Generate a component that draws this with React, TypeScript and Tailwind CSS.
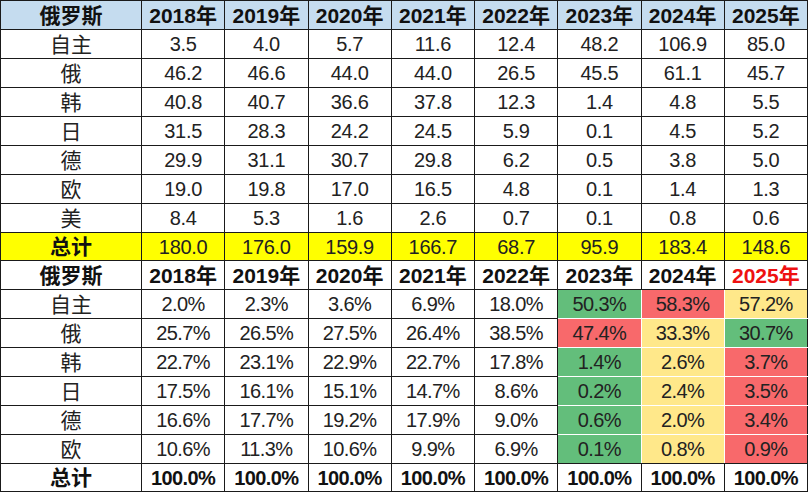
import React from 'react';

const years = ['2018年', '2019年', '2020年', '2021年', '2022年', '2023年', '2024年', '2025年'];

const volume: [string, string[]][] = [
  ['自主', ['3.5', '4.0', '5.7', '11.6', '12.4', '48.2', '106.9', '85.0']],
  ['俄', ['46.2', '46.6', '44.0', '44.0', '26.5', '45.5', '61.1', '45.7']],
  ['韩', ['40.8', '40.7', '36.6', '37.8', '12.3', '1.4', '4.8', '5.5']],
  ['日', ['31.5', '28.3', '24.2', '24.5', '5.9', '0.1', '4.5', '5.2']],
  ['德', ['29.9', '31.1', '30.7', '29.8', '6.2', '0.5', '3.8', '5.0']],
  ['欧', ['19.0', '19.8', '17.0', '16.5', '4.8', '0.1', '1.4', '1.3']],
  ['美', ['8.4', '5.3', '1.6', '2.6', '0.7', '0.1', '0.8', '0.6']],
];
const volumeTotal = ['180.0', '176.0', '159.9', '166.7', '68.7', '95.9', '183.4', '148.6'];

// g = green, r = red, y = yellow for the last three columns
const share: [string, string[], string][] = [
  ['自主', ['2.0%', '2.3%', '3.6%', '6.9%', '18.0%', '50.3%', '58.3%', '57.2%'], 'gry'],
  ['俄', ['25.7%', '26.5%', '27.5%', '26.4%', '38.5%', '47.4%', '33.3%', '30.7%'], 'ryg'],
  ['韩', ['22.7%', '23.1%', '22.9%', '22.7%', '17.8%', '1.4%', '2.6%', '3.7%'], 'gyr'],
  ['日', ['17.5%', '16.1%', '15.1%', '14.7%', '8.6%', '0.2%', '2.4%', '3.5%'], 'gyr'],
  ['德', ['16.6%', '17.7%', '19.2%', '17.9%', '9.0%', '0.6%', '2.0%', '3.4%'], 'gyr'],
  ['欧', ['10.6%', '11.3%', '10.6%', '9.9%', '6.9%', '0.1%', '0.8%', '0.9%'], 'gyr'],
];

const fill: Record<string, string> = {
  g: 'bg-[#63be7b]',
  r: 'bg-[#f8696b]',
  y: 'bg-[#ffe88a]',
};

const cell = 'border border-[#1a1a1a] text-center p-0 leading-none';

const App: React.FC = () => {
  return (
    <div className="w-[810px] h-[492px] bg-white overflow-hidden" style={{ fontFamily: '"Liberation Sans", "Noto Sans CJK SC", sans-serif' }}>
      <table className="table-fixed border-collapse w-[808px] text-[#222]">
        <colgroup>
          <col className="w-[141px]" />
          {years.map((y) => (
            <col key={y} />
          ))}
        </colgroup>
        <tbody>
          {/* volume header */}
          <tr className="h-[29px] bg-[#c5dcef] font-bold text-[21px] text-[#111]">
            <td className={cell}>俄罗斯</td>
            {years.map((y) => (
              <td key={y} className={cell}>{y}</td>
            ))}
          </tr>
          {volume.map(([name, vals]) => (
            <tr key={name} className="h-[29px] text-[20px]">
              <td className={`${cell} text-[21px]`}>{name}</td>
              {vals.map((v, i) => (
                <td key={i} className={`${cell} tracking-[-0.3px]`}>{v}</td>
              ))}
            </tr>
          ))}
          <tr className="h-[28px] bg-[#ffff00] text-[20px]">
            <td className={`${cell} font-bold text-[21px] text-[#111]`}>总计</td>
            {volumeTotal.map((v, i) => (
              <td key={i} className={`${cell} tracking-[-0.3px]`}>{v}</td>
            ))}
          </tr>

          {/* share header */}
          <tr className="h-[29px] font-bold text-[21px] text-[#111]">
            <td className={cell}>俄罗斯</td>
            {years.map((y, i) => (
              <td key={y} className={`${cell} ${i === 7 ? 'text-[#ee1111]' : ''}`}>{y}</td>
            ))}
          </tr>
          {share.map(([name, vals, colors], r) => (
            <tr key={name} className="h-[29px] text-[20px]">
              <td className={`${cell} text-[21px]`}>{name}</td>
              {vals.map((v, i) => {
                if (i < 5) {
                  return (
                    <td key={i} className={`${cell} tracking-[-0.6px]`}>{v}</td>
                  );
                }
                const c = colors[i - 5];
                const edge =
                  i === 5
                    ? 'border-l-[#1a1a1a] border-r-white'
                    : i === 7
                      ? 'border-l-white border-r-[#1a1a1a]'
                      : 'border-l-white border-r-white';
                const topEdge = r === 0 ? 'border-t-[#1a1a1a]' : 'border-t-white';
                const botEdge = r === share.length - 1 ? 'border-b-[#1a1a1a]' : 'border-b-white';
                return (
                  <td key={i} className={`${cell} ${fill[c]} ${edge} ${topEdge} ${botEdge} tracking-[-0.6px]`}>
                    {v}
                  </td>
                );
              })}
            </tr>
          ))}
          <tr className="h-[28px] font-bold text-[20px] text-[#111]">
            <td className={`${cell} text-[21px]`}>总计</td>
            {years.map((y) => (
              <td key={y} className={`${cell} tracking-[-0.6px]`}>100.0%</td>
            ))}
          </tr>
        </tbody>
      </table>
    </div>
  );
};

export default App;
